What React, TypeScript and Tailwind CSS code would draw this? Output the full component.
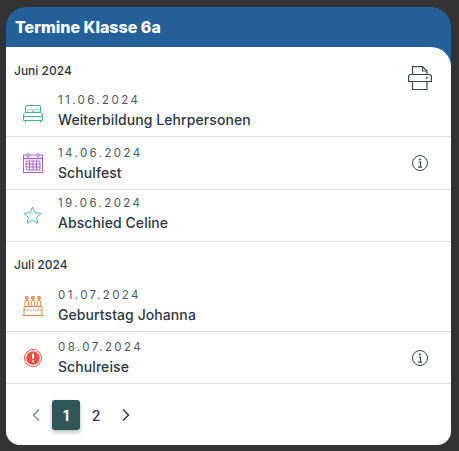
const font = { fontFamily: "Inter, 'Liberation Sans', sans-serif" };

function BedIcon() {
  return (
    <svg width="20" height="18" viewBox="0 0 20 18" fill="none" stroke="#3fb498" strokeWidth="1">
      <path d="M2.500 7.500V1.500a1 1 0 0 1 1-1h13a1 1 0 0 1 1 1v6" />
      <path d="M4.500 7V5.500a1 1 0 0 1 1-1h3a1 1 0 0 1 1 1V7M10.500 7V5.500a1 1 0 0 1 1-1h3a1 1 0 0 1 1 1V7" strokeOpacity="0.6" />
      <path d="M.5 11a3 3 0 0 1 2-3.500h15a3 3 0 0 1 2 3.500v4.500H.5z" />
      <path d="M.5 11.500h19M2.500 15.500v2M17.500 15.500v2" />
    </svg>
  );
}

function CalendarIcon() {
  return (
    <svg width="20" height="20" viewBox="0 0 20 20" fill="none" stroke="#a864c4" strokeWidth="1">
      <rect x="0.500" y="2" width="19" height="17.500" />
      <path d="M.5 5.500h19" strokeWidth="1.500" />
      <rect x="4" y="0.500" width="2" height="3.500" rx="1" fill="#fff" />
      <rect x="14" y="0.500" width="2" height="3.500" rx="1" fill="#fff" />
      <rect x="3" y="8" width="14" height="9" rx="1" />
      <path d="M6.500 8v9M10 8v9M13.500 8v9M3 11h14M3 14h14" />
    </svg>
  );
}

function StarIcon() {
  return (
    <svg width="19" height="18" viewBox="0 0 19 18" fill="none" stroke="#55acec" strokeWidth="1" strokeLinejoin="round">
      <path d="M9.500 1l2.500 5.700 6.200.6-4.700 4.100 1.400 6-5.400-3.200-5.400 3.200 1.400-6L.800 7.300 7 6.700z" />
    </svg>
  );
}

function CakeIcon() {
  return (
    <svg width="20" height="20" viewBox="0 0 20 20" fill="none" stroke="#e4813f" strokeWidth="1">
      <ellipse cx="3.800" cy="1.800" rx="1.500" ry="1.700" fill="#e4813f" fillOpacity="0.7" />
      <ellipse cx="10" cy="1.800" rx="1.500" ry="1.700" fill="#e4813f" fillOpacity="0.7" />
      <ellipse cx="16" cy="1.800" rx="1.500" ry="1.700" fill="#e4813f" fillOpacity="0.7" />
      <rect x="2" y="4.500" width="3.500" height="6" rx="1" />
      <rect x="8.200" y="4.500" width="3.500" height="6" rx="1" />
      <rect x="14.200" y="4.500" width="3.500" height="6" rx="1" />
      <path d="M2 10.500h16a1 1 0 0 1 1 1v8H1v-8a1 1 0 0 1 1-1z" />
      <path d="M1 13.500c2 1.500 3 1.500 4.500 0 1.500 1.500 3 1.500 4.500 0 1.500 1.500 3 1.500 4.500 0 1.500 1.500 2.500 1.500 4.500 0" strokeDasharray="1.500 1" />
      <path d="M0 19.500h20" />
    </svg>
  );
}

function AlertIcon() {
  return (
    <svg width="18" height="18" viewBox="0 0 18 18">
      <circle cx="9" cy="9" r="8.500" fill="none" stroke="#eb4f45" strokeWidth="1" />
      <circle cx="9" cy="9" r="6.800" fill="#eb4f45" />
      <rect x="8" y="4.500" width="2" height="5.500" rx="1" fill="#fff" />
      <circle cx="9" cy="12.300" r="1.100" fill="#fff" />
    </svg>
  );
}

function InfoIcon() {
  return (
    <svg width="16" height="16" viewBox="0 0 16 16" fill="none" stroke="#3b4654">
      <circle cx="8" cy="8" r="7.500" />
      <circle cx="8" cy="4.500" r="1" fill="#3b4654" stroke="none" />
      <path d="M6.500 7h2v5M6 12.200h4.200" strokeWidth="1.200" />
    </svg>
  );
}

function PrinterIcon() {
  return (
    <svg width="24" height="24" viewBox="0 0 24 24" fill="none" stroke="#3b4654" strokeWidth="1.200">
      <path d="M4.500 8.500V.6h10l4.500 4.400v3.500" />
      <path d="M14.500.6v4.400H19" />
      <path d="M2.500 8.500h19a1.900 1.900 0 0 1 1.900 1.900v5.100H.6v-5.100a1.900 1.900 0 0 1 1.900-1.900z" />
      <path d="M4.500 15.500v8h14.500v-8" />
      <circle cx="18.800" cy="12" r="0.900" fill="#3b4654" stroke="none" />
    </svg>
  );
}

function Row({ date, title, icon, info, className, textClass }: { date: string; title: string; icon: React.ReactNode; info?: boolean; className: string; textClass?: string }) {
  return (
    <div className={`flex items-center border-b border-[#dedede] ${className}`}>
      <div className="flex w-[52px] shrink-0 justify-center pl-[1px]">{icon}</div>
      <div className={`flex-1 ${textClass ?? ""}`}>
        <div className="text-[11.500px] leading-[14px] tracking-[2.400px] text-[#4b5563]">{date}</div>
        <div className="mt-[5px] text-[14px] font-medium leading-[16px] tracking-[0.080px] text-[#2f3742]">{title}</div>
      </div>
      {info && (
        <div className="mr-[23px]">
          <InfoIcon />
        </div>
      )}
    </div>
  );
}

export default function App() {
  return (
    <div className="h-[451px] w-[459px] bg-[#333333] pl-[6px] pr-[8px] pt-[7px]" style={font}>
      <div className="rounded-t-[20px] rounded-b-[14px] bg-[#256098]">
        <div className="flex h-[40px] items-center pl-[9px]">
          <h1 className="text-[16px] font-extrabold text-white">Termine Klasse 6a</h1>
        </div>
        <div className="relative h-[398px] rounded-tr-[20px] rounded-b-[14px] bg-white">
          <div className="absolute right-[19px] top-[19px]">
            <PrinterIcon />
          </div>
          <div className="flex h-[45px] items-center pl-[8px] pt-[2px] text-[12px] font-medium text-[#2f3742]">Juni 2024</div>
          <Row className="h-[45px]" textClass="pb-[7px]" date="11.06.2024" title="Weiterbildung Lehrpersonen" icon={<BedIcon />} />
          <Row className="h-[53px]" date="14.06.2024" title="Schulfest" icon={<CalendarIcon />} info />
          <Row className="h-[52px]" textClass="pb-[4px]" date="19.06.2024" title="Abschied Celine" icon={<div className="-translate-y-[1px]"><StarIcon /></div>} />
          <div className="flex h-[45px] items-center pl-[8px] text-[12px] font-medium text-[#2f3742]">Juli 2024</div>
          <Row className="h-[45px]" textClass="pb-[8px]" date="01.07.2024" title="Geburtstag Johanna" icon={<div className="-translate-y-[3px]"><CakeIcon /></div>} />
          <Row className="h-[52px]" date="08.07.2024" title="Schulreise" icon={<AlertIcon />} info />
          <div className="flex items-center pl-[24px] pt-[16px] text-[14px] font-medium text-[#2f3742]">
            <svg width="12" height="14" viewBox="0 0 12 14" fill="none" stroke="#7d8f92" strokeWidth="1.500" className="mr-[10px]">
              <path d="M9 1.500L3.500 7 9 12.500" />
            </svg>
            <div className="flex h-[30px] w-[28px] items-center justify-center rounded-[3px] bg-[#2f5757] font-bold text-white shadow-[0_2px_4px_rgba(0,0,0,0.3)]">1</div>
            <div className="mr-[8px] w-[32px] text-center">2</div>
            <svg width="12" height="14" viewBox="0 0 12 14" fill="none" stroke="#2f3742" strokeWidth="1.500">
              <path d="M3 1.500L8.500 7 3 12.500" />
            </svg>
          </div>
        </div>
      </div>
    </div>
  );
}
